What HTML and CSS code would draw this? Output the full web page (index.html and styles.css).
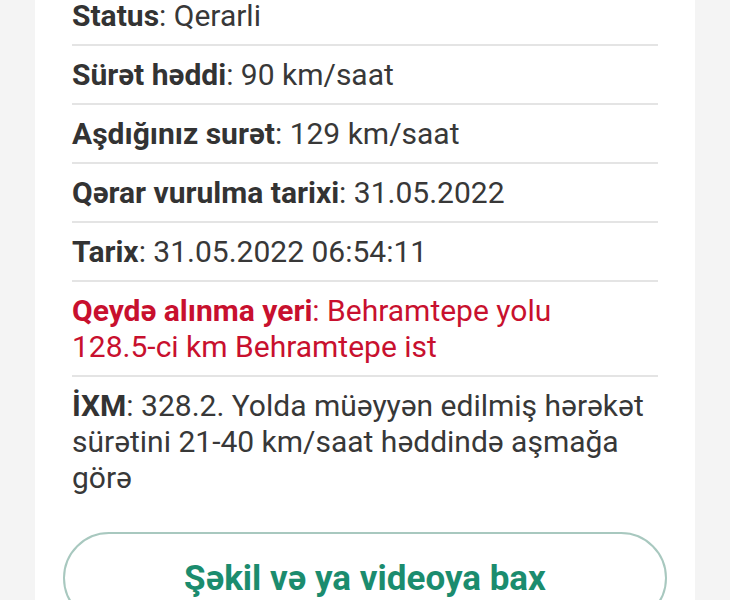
FILE: index.html
```html
<!DOCTYPE html>
<html lang="az">
<head>
    <meta charset="UTF-8">
    <title>Cərimə</title>
    <link rel="stylesheet" href="styles.css">
</head>
<body>

    <div class="card">
        <div class="list">
            <div class="row"><b>Status</b>: Qerarli</div>
            <div class="row"><b>Sürət həddi</b>: 90 km/saat</div>
            <div class="row"><b>Aşdığınız surət</b>: 129 km/saat</div>
            <div class="row"><b>Qərar vurulma tarixi</b>: 31.05.2022</div>
            <div class="row"><b>Tarix</b>: 31.05.2022 06:54:11</div>
            <div class="row red"><b>Qeydə alınma yeri</b>: Behramtepe yolu 128.5-ci km Behramtepe ist</div>
            <div class="row last"><b>İXM</b>: 328.2. Yolda müəyyən edilmiş hərəkət sürətini 21-40 km/saat həddində aşmağa görə</div>
        </div>
        <div class="media-btn">Şəkil və ya videoya bax</div>
    </div>

</body>
</html>
```

FILE: styles.css
```css
        body {
            font-family: Roboto, 'Liberation Sans', sans-serif;
            margin: 0;
            background: #f4f4f4;
            color: #383838;
            overflow: hidden;
        }
        .card {
            background: #fff;
            margin: -13px 35px 0 35px;
            padding: 0 28px 40px 28px;
            min-height: 700px;
            box-sizing: border-box;
        }
        .list {
            margin: 0 9px;
        }
        .row {
            font-size: 30px;
            line-height: 36px;
            padding: 11px 0 10px 0;
            border-bottom: 2px solid #e4e4e4;
        }
        .row b {
            font-weight: bold;
            color: #333;
        }
        .row.red {
            color: #c8102e;
            padding-right: 30px;
        }
        .row.red b {
            color: #c8102e;
        }
        .row.last {
            border-bottom: none;
        }
        .media-btn {
            margin-top: 26px;
            height: 88px;
            border: 2px solid #a8c8bf;
            border-radius: 46px;
            display: flex;
            align-items: center;
            justify-content: center;
            color: #1b8c6e;
            font-weight: bold;
            font-size: 35px;
        }
```
